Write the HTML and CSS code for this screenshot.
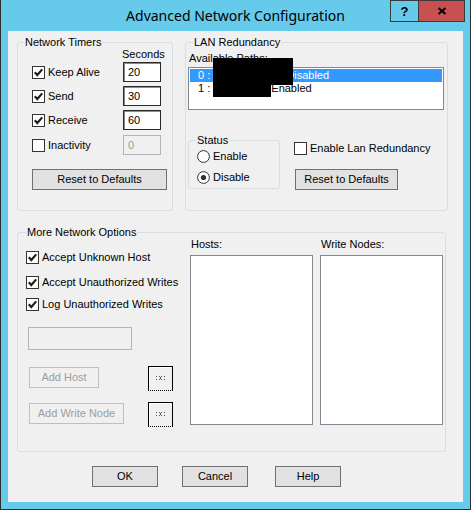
FILE: index.html
```
<!DOCTYPE html>
<html>
<head>
<meta charset="utf-8">
<title>Advanced Network Configuration</title>
<link rel="stylesheet" href="styles.css">
</head>
<body>
<div class="window">
  <div class="titlebar"><span class="title">Advanced Network Configuration</span></div>
  <div class="caption">
    <div class="cap-btn help">?</div>
    <div class="cap-btn close"><svg width="10" height="8" viewBox="0 0 10 8"><path d="M1.5 1 8.5 7M8.5 1 1.5 7" stroke="#000" stroke-width="2" fill="none"/></svg></div>
  </div>
  <div class="client">
    <div class="top-row">
      <div class="group timers">
        <span class="legend">Network Timers</span>
        <div class="seconds">Seconds</div>
        <div class="timer-row first">
          <div class="check"><svg class="cb" width="13" height="13" viewBox="0 0 13 13"><rect x="0.5" y="0.5" width="12" height="12" fill="#fff" stroke="#333"/><path d="M2.8 6.3 5.3 9 10.2 3.4" fill="none" stroke="#1e1e1e" stroke-width="2.2"/></svg><span>Keep Alive</span></div>
          <div class="textbox">20</div>
        </div>
        <div class="timer-row">
          <div class="check"><svg class="cb" width="13" height="13" viewBox="0 0 13 13"><rect x="0.5" y="0.5" width="12" height="12" fill="#fff" stroke="#333"/><path d="M2.8 6.3 5.3 9 10.2 3.4" fill="none" stroke="#1e1e1e" stroke-width="2.2"/></svg><span>Send</span></div>
          <div class="textbox">30</div>
        </div>
        <div class="timer-row">
          <div class="check"><svg class="cb" width="13" height="13" viewBox="0 0 13 13"><rect x="0.5" y="0.5" width="12" height="12" fill="#fff" stroke="#333"/><path d="M2.8 6.3 5.3 9 10.2 3.4" fill="none" stroke="#1e1e1e" stroke-width="2.2"/></svg><span>Receive</span></div>
          <div class="textbox">60</div>
        </div>
        <div class="timer-row last">
          <div class="check"><svg class="cb" width="13" height="13" viewBox="0 0 13 13"><rect x="0.5" y="0.5" width="12" height="12" fill="#fff" stroke="#333"/></svg><span>Inactivity</span></div>
          <div class="textbox disabled">0</div>
        </div>
        <div class="btn reset-timers">Reset to Defaults</div>
      </div>
      <div class="group lan">
        <span class="legend">LAN Redundancy</span>
        <div class="paths-label">Available Paths:</div>
        <div class="listbox paths">
          <div class="item selected">0 : <span class="hidden-name n0"></span>Disabled</div>
          <div class="item">1 : <span class="hidden-name n1"></span>Enabled</div>
        </div>
        <div class="redact r1"></div>
        <div class="redact r2"></div>
        <div class="lan-bottom">
          <div class="group status">
            <span class="legend">Status</span>
            <div class="radio-row r-enable"><svg width="13" height="13" viewBox="0 0 13 13"><circle cx="6.5" cy="6.5" r="5.9" fill="#fff" stroke="#333"/></svg><span>Enable</span></div>
            <div class="radio-row r-disable"><svg width="13" height="13" viewBox="0 0 13 13"><circle cx="6.5" cy="6.5" r="5.9" fill="#fff" stroke="#333"/><circle cx="6.5" cy="6.5" r="2.6" fill="#333"/></svg><span>Disable</span></div>
          </div>
          <div class="lan-right">
            <div class="check"><svg class="cb" width="13" height="13" viewBox="0 0 13 13"><rect x="0.5" y="0.5" width="12" height="12" fill="#fff" stroke="#333"/></svg><span>Enable Lan Redundancy</span></div>
            <div class="btn reset-lan">Reset to Defaults</div>
          </div>
        </div>
      </div>
    </div>
    <div class="group more">
      <span class="legend">More Network Options</span>
      <div class="more-left">
        <div class="check opt1"><svg class="cb" width="13" height="13" viewBox="0 0 13 13"><rect x="0.5" y="0.5" width="12" height="12" fill="#fff" stroke="#333"/><path d="M2.8 6.3 5.3 9 10.2 3.4" fill="none" stroke="#1e1e1e" stroke-width="2.2"/></svg><span>Accept Unknown Host</span></div>
        <div class="check opt2"><svg class="cb" width="13" height="13" viewBox="0 0 13 13"><rect x="0.5" y="0.5" width="12" height="12" fill="#fff" stroke="#333"/><path d="M2.8 6.3 5.3 9 10.2 3.4" fill="none" stroke="#1e1e1e" stroke-width="2.2"/></svg><span>Accept Unauthorized Writes</span></div>
        <div class="check opt3"><svg class="cb" width="13" height="13" viewBox="0 0 13 13"><rect x="0.5" y="0.5" width="12" height="12" fill="#fff" stroke="#333"/><path d="M2.8 6.3 5.3 9 10.2 3.4" fill="none" stroke="#1e1e1e" stroke-width="2.2"/></svg><span>Log Unauthorized Writes</span></div>
        <div class="textbox disabled entry"></div>
        <div class="btn-row row1">
          <div class="btn disabled add-host">Add Host</div>
          <div class="small-btn"><svg width="9" height="7" viewBox="0 0 9 7"><g fill="#555"><rect x="0" y="1" width="1" height="1"/><rect x="0" y="4" width="1" height="1"/><rect x="8" y="1" width="1" height="1"/><rect x="8" y="4" width="1" height="1"/><rect x="3" y="1" width="1" height="1"/><rect x="5" y="1" width="1" height="1"/><rect x="4" y="2" width="1" height="2"/><rect x="3" y="4" width="1" height="1"/><rect x="5" y="4" width="1" height="1"/></g></svg></div>
        </div>
        <div class="btn-row row2">
          <div class="btn disabled add-node">Add Write Node</div>
          <div class="small-btn"><svg width="9" height="7" viewBox="0 0 9 7"><g fill="#555"><rect x="0" y="1" width="1" height="1"/><rect x="0" y="4" width="1" height="1"/><rect x="8" y="1" width="1" height="1"/><rect x="8" y="4" width="1" height="1"/><rect x="3" y="1" width="1" height="1"/><rect x="5" y="1" width="1" height="1"/><rect x="4" y="2" width="1" height="2"/><rect x="3" y="4" width="1" height="1"/><rect x="5" y="4" width="1" height="1"/></g></svg></div>
        </div>
      </div>
      <div class="list-col hosts">
        <div class="list-label">Hosts:</div>
        <div class="listbox big"></div>
      </div>
      <div class="list-col nodes">
        <div class="list-label">Write Nodes:</div>
        <div class="listbox big"></div>
      </div>
    </div>
    <div class="footer">
      <div class="btn dlg">OK</div>
      <div class="btn dlg cancel">Cancel</div>
      <div class="btn dlg help-btn">Help</div>
    </div>
  </div>
</div>
</body>
</html>
```
FILE: styles.css
```
body {
  margin: 0;
  font-family: "Liberation Sans", Arial, sans-serif;
  font-size: 11px;
  line-height: 13px;
  color: #000;
}

.window {
  position: relative;
  width: 471px;
  height: 510px;
  box-sizing: border-box;
  background: #66cbea;
  border: 1px solid #2e2e2e;
  border-top: none;
  padding: 0 7px 7px 7px;
  display: flex;
  flex-direction: column;
}

.titlebar {
  flex: none;
  height: 31px;
  display: flex;
  align-items: center;
  justify-content: center;
}

.title {
  font-family: "Noto Sans", "Open Sans", sans-serif;
  font-size: 14px;
  color: #000;
}

.caption {
  position: absolute;
  top: 0;
  right: 5px;
  display: flex;
  border: 1px solid #3a3a3a;
}

.cap-btn {
  height: 20px;
  display: flex;
  align-items: center;
  justify-content: center;
}

.help {
  width: 27px;
  border-right: 1px solid #3a3a3a;
  font-weight: bold;
  font-size: 13px;
}

.close {
  width: 45px;
  background: #c75050;
}

.client {
  flex: none;
  height: 471px;
  background: #f0f0f0;
  display: flex;
  flex-direction: column;
  align-items: flex-start;
}

.top-row {
  display: flex;
  gap: 12px;
  margin: 11px 0 0 9px;
}

.group {
  position: relative;
  box-sizing: border-box;
  border: 1px solid #d5dfe5;
  border-radius: 3px;
}

.legend {
  position: absolute;
  top: -7px;
  background: #f0f0f0;
  padding: 0 1px;
  white-space: nowrap;
}

.check {
  display: flex;
  align-items: center;
  gap: 3px;
  white-space: nowrap;
}

.cb {
  display: block;
  flex: none;
}

.textbox {
  box-sizing: border-box;
  background: #fff;
  border: 1px solid #2a2a2a;
  box-shadow: inset 1px 1px 0 #8a8a8a;
  padding-left: 4px;
  line-height: 18px;
}

.textbox.disabled {
  background: #f0f0f0;
  border-color: #b4b4b4;
  box-shadow: none;
  color: #9a9a9a;
}

.btn {
  box-sizing: border-box;
  height: 21px;
  border: 1px solid #707070;
  background: #e1e1e1;
  display: flex;
  align-items: center;
  justify-content: center;
  white-space: nowrap;
}

.btn.disabled {
  border-color: #bfbfbf;
  background: #f0f0f0;
  color: #9d9d9d;
}

/* Network timers */
.timers {
  width: 156px;
  height: 169px;
}

.timers .legend {
  left: 6px;
}

.seconds {
  margin-top: 5px;
  padding-left: 104px;
}

.timer-row {
  display: grid;
  grid-template-columns: 91px 38px;
  align-items: center;
  height: 20px;
  padding-left: 14px;
  margin-top: 4px;
}

.timer-row .textbox {
  height: 20px;
}

.timer-row.first {
  margin-top: 1px;
}

.timer-row.last {
  margin-top: 5px;
}

.reset-timers {
  width: 135px;
  margin: 14px 0 0 14px;
}

/* LAN redundancy */
.lan {
  width: 263px;
  height: 169px;
}

.lan > .legend {
  left: 7px;
}

.paths-label {
  margin: 9px 0 0 3px;
}

.listbox {
  box-sizing: border-box;
  border: 1px solid #828790;
  background: #fff;
}

.paths {
  width: 256px;
  height: 43px;
  margin: 2px 0 0 2px;
  padding: 1px;
}

.item {
  height: 13px;
  padding-left: 8px;
  white-space: nowrap;
}

.item.selected {
  background: #3399ff;
  color: #fff;
}

.hidden-name {
  display: inline-block;
}

.n0 {
  width: 73px;
}

.n1 {
  width: 58px;
}

.redact {
  position: absolute;
  background: #000;
}

.r1 {
  left: 27px;
  top: 15px;
  width: 80px;
  height: 27px;
}

.r2 {
  left: 27px;
  top: 42px;
  width: 58px;
  height: 12px;
}

.lan-bottom {
  display: flex;
  margin: 30px 0 0 2px;
}

.status {
  width: 92px;
  height: 49px;
}

.status .legend {
  left: 7px;
}

.radio-row {
  display: flex;
  align-items: center;
  gap: 3px;
  height: 13px;
  margin-left: 8px;
}

.radio-row svg {
  display: block;
  flex: none;
}

.r-enable {
  margin-top: 9px;
}

.r-disable {
  margin-top: 8px;
}

.lan-right {
  margin-left: 14px;
  display: flex;
  flex-direction: column;
  align-items: flex-start;
}

.lan-right .check {
  margin-top: 2px;
}

.reset-lan {
  width: 103px;
  margin: 14px 0 0 1px;
}

/* More network options */
.more {
  width: 429px;
  height: 220px;
  margin: 21px 0 0 9px;
  display: flex;
}

.more .legend {
  left: 8px;
}

.more-left {
  width: 155px;
  box-sizing: border-box;
  padding-left: 8px;
  display: flex;
  flex-direction: column;
  align-items: flex-start;
}

.opt1 {
  margin-top: 18px;
}

.opt2 {
  margin-top: 12px;
}

.opt3 {
  margin-top: 9px;
}

.entry {
  width: 104px;
  height: 23px;
  margin: 16px 0 0 2px;
}

.btn-row {
  display: flex;
  align-items: flex-start;
  width: 144px;
  height: 25px;
  margin-left: 3px;
}

.btn-row .btn {
  margin-top: 1px;
}

.row1 {
  margin-top: 16px;
}

.row2 {
  margin-top: 11px;
}

.add-host {
  width: 70px;
}

.add-node {
  width: 95px;
}

.small-btn {
  box-sizing: border-box;
  margin-left: auto;
  width: 25px;
  height: 25px;
  background: #f0f0f0;
  border: 1px solid #000;
  border-bottom: 1px dotted #000;
  box-shadow: inset 1px 1px 0 #fff;
  display: flex;
  align-items: center;
  justify-content: center;
}

.small-btn svg {
  display: block;
}

.list-col {
  display: flex;
  flex-direction: column;
}

.hosts {
  margin-left: 17px;
}

.nodes {
  margin-left: 7px;
}

.list-label {
  margin-top: 5px;
  padding-left: 1px;
}

.listbox.big {
  width: 123px;
  height: 170px;
  margin-top: 4px;
}

/* Footer buttons */
.footer {
  display: flex;
  margin: 14px 0 0 84px;
}

.dlg {
  width: 66px;
}

.cancel {
  margin-left: 24px;
}

.help-btn {
  margin-left: 27px;
}
```
